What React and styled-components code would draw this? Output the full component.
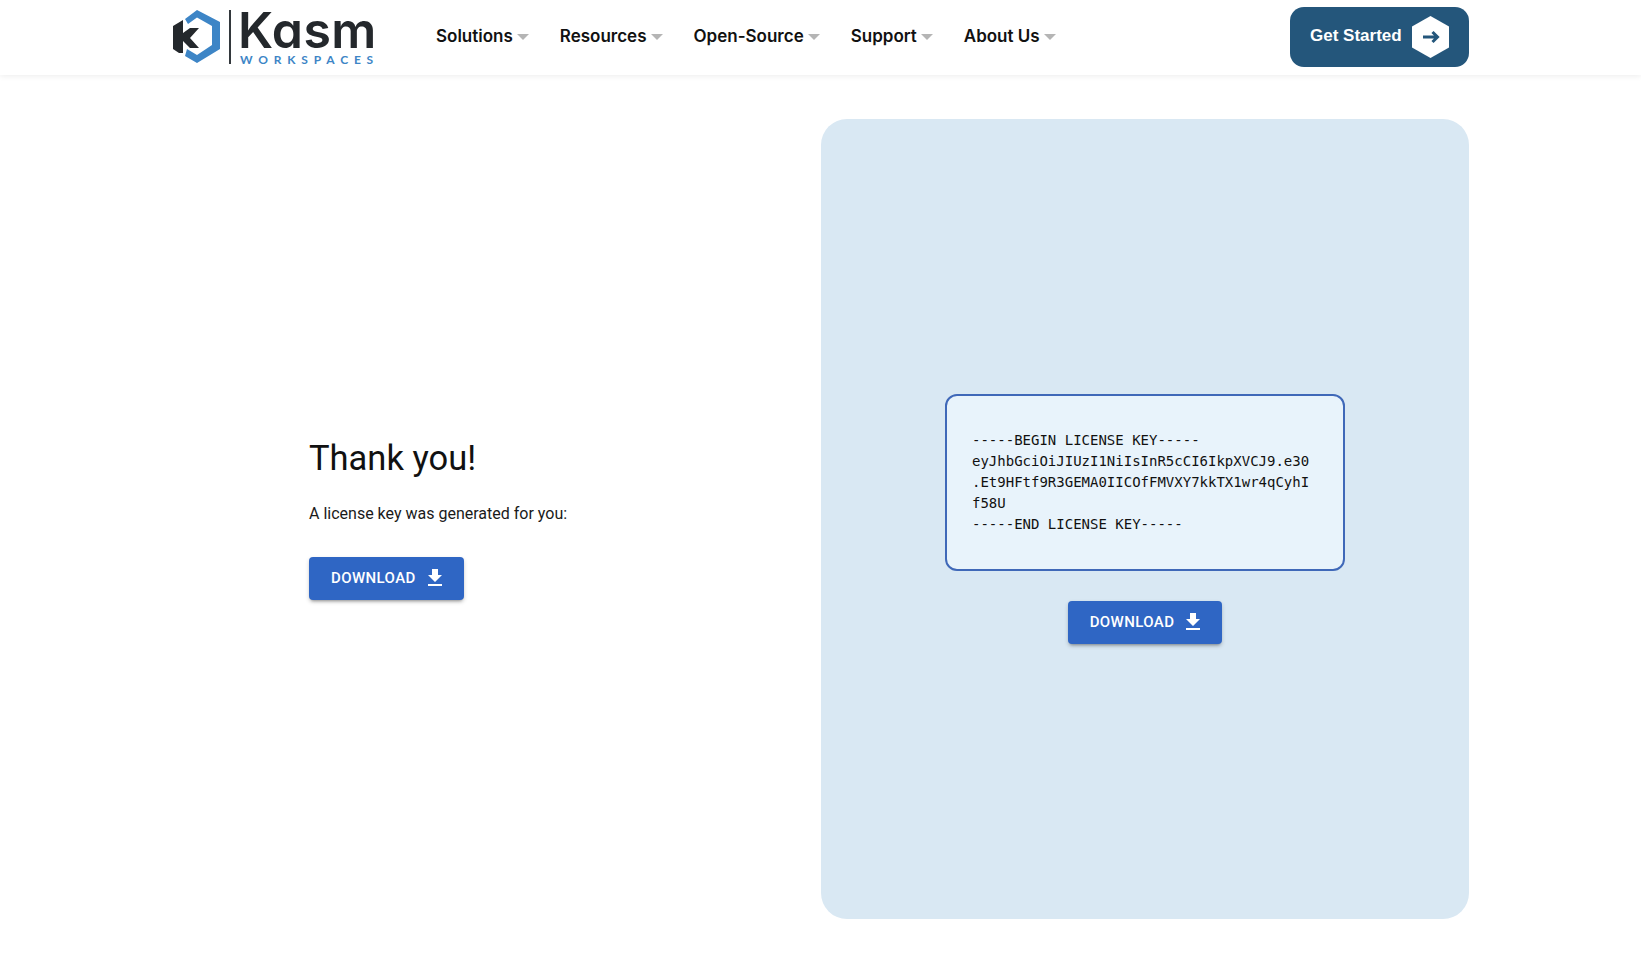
import React from 'react';
import styled, { createGlobalStyle } from 'styled-components';

const NAV_ITEMS = ['Solutions', 'Resources', 'Open-Source', 'Support', 'About Us'];

const LICENSE_KEY = `-----BEGIN LICENSE KEY-----
eyJhbGciOiJIUzI1NiIsInR5cCI6IkpXVCJ9.e30
.Et9HFtf9R3GEMA0IICOfFMVXY7kkTX1wr4qCyhI
f58U
-----END LICENSE KEY-----`;

function LogoMark() {
  return (
    <svg width="49" height="56" viewBox="4 3 49 56">
      <path
        d="M17 13 L29 4 L52 16 V43 L29 57 L17 50 L19 43 L29 49 L44 39 V20 L29 11.5 L20 18 Z"
        fill="#3d85c6"
      />
      <path
        d="M5 20 L15 14 V27 L22 22 H31 L22 32 L31 42 H22 L15 35 V47 H11 L5 43 Z"
        fill="#24282c"
      />
    </svg>
  );
}

function DownloadIcon() {
  return (
    <svg width="14" height="17" viewBox="0 0 14 17">
      <path d="M4 0 H10 V6 H14 L7 13 L0 6 H4 Z M0 15 H14 V17 H0 Z" fill="currentColor" />
    </svg>
  );
}

function App() {
  return (
    <Page>
      <GlobalStyle />
      <Header>
        <Logo>
          <LogoMark />
          <LogoDivider />
          <LogoText>
            <LogoName>Kasm</LogoName>
            <LogoSub>WORKSPACES</LogoSub>
          </LogoText>
        </Logo>
        <Nav>
          {NAV_ITEMS.map((item) => (
            <NavItem key={item}>
              {item}
              <Caret />
            </NavItem>
          ))}
        </Nav>
        <GetStarted>
          <GetStartedLabel>Get Started</GetStartedLabel>
          <HexBadge>
            <svg width="37" height="42" viewBox="0 0 37 42">
              <path d="M18.5 0 L37 10.5 V31.5 L18.5 42 L0 31.5 V10.5 Z" fill="#fff" />
              <path d="M11 21 H24.5 M20.5 16 L25.5 21 L20.5 26" fill="none" stroke="#24567b" strokeWidth="3" />
            </svg>
          </HexBadge>
        </GetStarted>
      </Header>
      <Main>
        <Intro>
          <Title>Thank you!</Title>
          <Lead>A license key was generated for you:</Lead>
          <DownloadButton>
            DOWNLOAD
            <DownloadIcon />
          </DownloadButton>
        </Intro>
        <Panel>
          <KeyBox>{LICENSE_KEY}</KeyBox>
          <DownloadButton>
            DOWNLOAD
            <DownloadIcon />
          </DownloadButton>
        </Panel>
      </Main>
    </Page>
  );
}

export default App;

const GlobalStyle = createGlobalStyle`
  html, body {
    margin: 0;
    background: #fff;
  }
`;

const Page = styled.div`
  width: 1641px;
  height: 964px;
  overflow: hidden;
  font-family: Roboto, "Liberation Sans", sans-serif;
  color: #111;
`;

const Header = styled.header`
  height: 75px;
  box-sizing: border-box;
  padding: 0 172px 2px 172px;
  display: flex;
  align-items: center;
  background: #fff;
  box-shadow: 0 1px 6px rgba(0, 0, 0, 0.08);
`;

const Logo = styled.div`
  display: flex;
  align-items: center;
  width: 264px;
`;

const LogoDivider = styled.div`
  width: 2px;
  height: 54px;
  margin: 0 7px 0 8px;
  background: #33383c;
`;

const LogoText = styled.div`
  display: flex;
  flex-direction: column;
  margin-top: 3px;
`;

const LogoName = styled.div`
  font-family: Inter, sans-serif;
  font-size: 50px;
  font-weight: 600;
  font-feature-settings: "cv11";
  line-height: 40px;
  letter-spacing: 0.5px;
  color: #24282c;
`;

const LogoSub = styled.div`
  margin: 3px 0 0 2px;
  font-family: Lato, sans-serif;
  font-size: 12px;
  font-weight: 700;
  line-height: 13px;
  letter-spacing: 5.8px;
  color: #3d85c6;
`;

const Nav = styled.nav`
  display: flex;
  align-items: center;
  gap: 31px;
  flex: 1;
  margin-bottom: 2px;
`;

const NavItem = styled.div`
  display: flex;
  align-items: center;
  font-family: Inter, sans-serif;
  font-size: 17px;
  font-weight: 600;
  color: #111;
`;

const Caret = styled.span`
  width: 0;
  height: 0;
  margin: 3px 0 0 4px;
  border-left: 6px solid transparent;
  border-right: 6px solid transparent;
  border-top: 6px solid #b5b5b5;
`;

const GetStarted = styled.div`
  width: 179px;
  height: 60px;
  box-sizing: border-box;
  padding-left: 20px;
  display: flex;
  align-items: center;
  gap: 10px;
  border-radius: 14px;
  background: #24567b;
  color: #fff;
  font-family: "Liberation Sans", sans-serif;
  font-size: 17px;
  font-weight: 700;
`;

const GetStartedLabel = styled.span`
  margin-bottom: 2px;
`;

const HexBadge = styled.span`
  display: flex;
`;

const Main = styled.main`
  display: flex;
  align-items: stretch;
  padding: 44px 172px 0 309px;
`;

const Intro = styled.section`
  flex: 1;
  display: flex;
  flex-direction: column;
  align-items: flex-start;
  justify-content: center;
  padding-bottom: 1px;
`;

const Title = styled.h1`
  margin: 0 0 23px;
  font-size: 34.5px;
  font-weight: 400;
  line-height: 42px;
  color: #111;
`;

const Lead = styled.p`
  margin: 0 0 31px;
  font-size: 16px;
  line-height: 24px;
  color: #1a1a1a;
`;

const DownloadButton = styled.button`
  height: 43px;
  padding: 0 22px 2px 22px;
  display: flex;
  align-items: center;
  gap: 12px;
  border: none;
  border-radius: 4px;
  background: #2f66c4;
  color: #fff;
  font-family: Roboto, sans-serif;
  font-size: 15px;
  font-weight: 500;
  letter-spacing: 0.4px;
  box-shadow: 0 3px 3px -2px rgba(0, 0, 0, 0.3), 0 2px 4px rgba(0, 0, 0, 0.18);
`;

const Panel = styled.section`
  width: 648px;
  height: 800px;
  display: flex;
  flex-direction: column;
  align-items: center;
  justify-content: center;
  gap: 30px;
  border-radius: 26px;
  background: #d9e8f3;
`;

const KeyBox = styled.pre`
  width: 400px;
  height: 177px;
  box-sizing: border-box;
  margin: 0;
  padding: 34px 25px;
  border: 2px solid #3f68b8;
  border-radius: 12px;
  background: #e8f3fb;
  font-family: "DejaVu Sans Mono", monospace;
  font-size: 14px;
  line-height: 21px;
  color: #111;
`;
